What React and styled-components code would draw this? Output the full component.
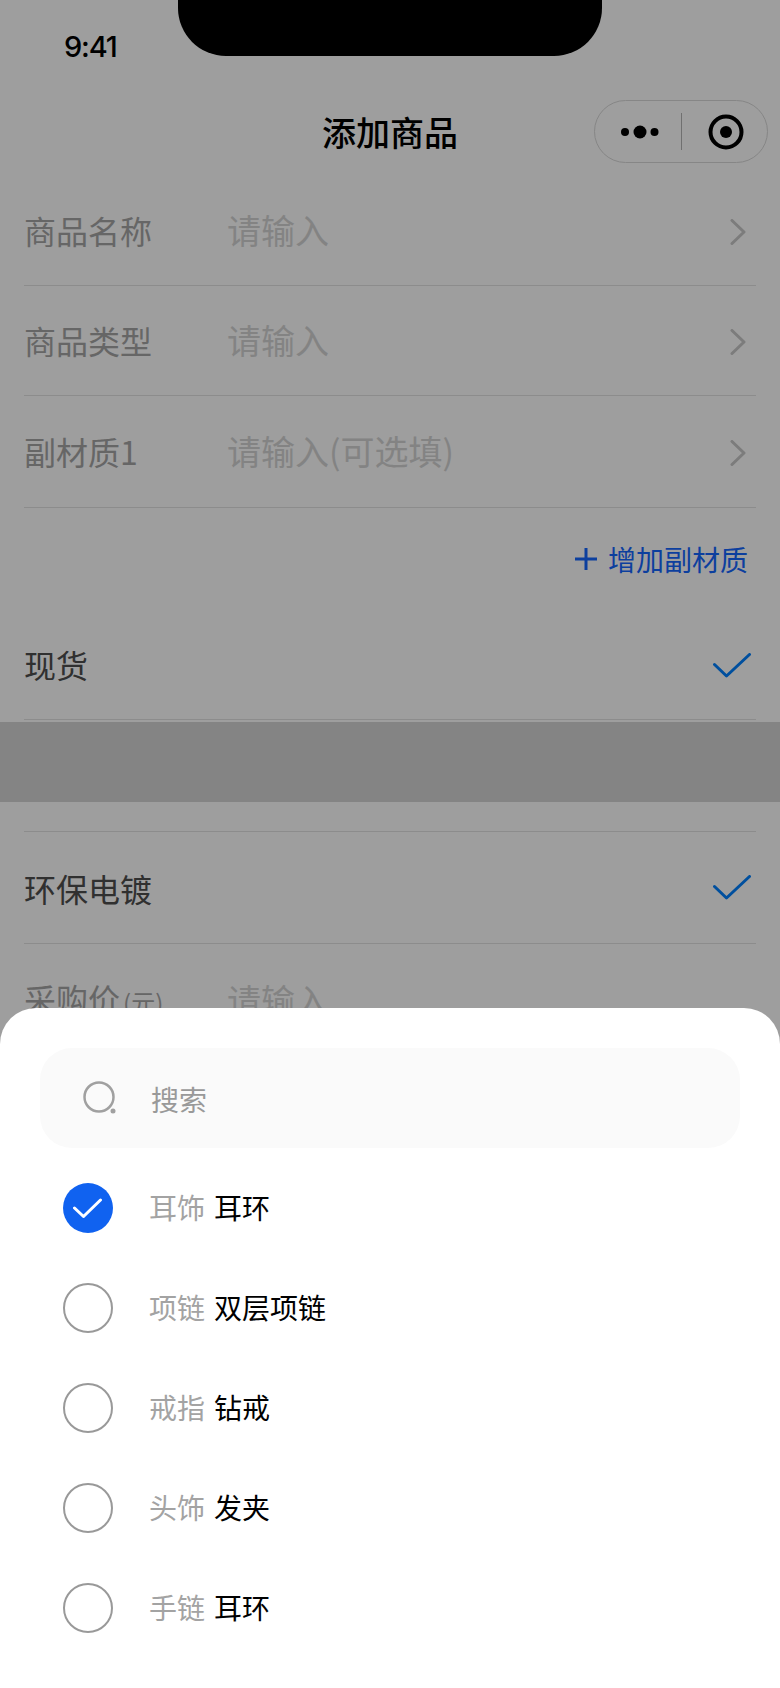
import styled, { createGlobalStyle } from "styled-components";

const GlobalStyle = createGlobalStyle`
  html, body {
    margin: 0;
    padding: 0;
    background: #fff;
  }
  * {
    box-sizing: border-box;
  }
`

const Page = styled.div`
  position: relative;
  width: 780px;
  height: 1688px;
  overflow: hidden;
  background: #fff;
  font-family: "Noto Sans CJK SC", "Noto Sans", sans-serif;
`
const Notch = styled.div`
  position: absolute;
  top: 0;
  left: 178px;
  width: 424px;
  height: 56px;
  background: #000;
  border-radius: 0 0 48px 48px;
`
const StatusBar = styled.div`
  height: 100px;
  padding: 31px 0 0 64px;
`
const Time = styled.span`
  font-family: "Inter", "Liberation Sans", sans-serif;
  font-size: 29px;
  line-height: 32px;
  font-weight: 500;
  letter-spacing: -1.2px;
  color: #000;
`
const NavBar = styled.div`
  position: relative;
  display: flex;
  justify-content: center;
  align-items: center;
  height: 63px;
`
const Title = styled.h1`
  margin: 0;
  font-size: 34px;
  line-height: 63px;
  font-weight: 500;
  color: #000;
`
const Capsule = styled.div`
  position: absolute;
  top: 0;
  right: 12px;
  display: flex;
  align-items: center;
  width: 174px;
  height: 63px;
  border: 1px solid #d8d8d8;
  border-radius: 32px;
`
const CapsuleSide = styled.div`
  display: flex;
  justify-content: center;
  align-items: center;
  flex: 1;
  padding-left: ${(props) => props.$shift}px;
`
const CapsuleLine = styled.div`
  width: 1px;
  height: 37px;
  background: #b5b5b5;
`
const Form = styled.div`
  padding: 13px 24px 0;
`
const Row = styled.div`
  display: flex;
  align-items: center;
  height: ${(props) => props.$height}px;
  border-bottom: ${(props) => (props.$plain ? "none" : "1px solid #e2e2e2")};
`
const Label = styled.div`
  width: 203px;
  padding-bottom: ${(props) => props.$lift || 0}px;
  font-size: 32px;
  line-height: 44px;
  white-space: nowrap;
  color: ${(props) => (props.$strong ? "#4e4e4e" : "#a5a5a5")};
`
const Unit = styled.span`
  margin-left: 3px;
  font-size: 24px;
`
const Placeholder = styled.div`
  flex: 1;
  padding-bottom: ${(props) => props.$lift || 0}px;
  font-size: 34px;
  line-height: 44px;
  color: #d4d4d4;
`
const ChevronIcon = styled.svg`
  margin: 2px 10px 0 0;
`
const CheckIcon = styled.svg`
  margin-right: 5px;
`
const AddRow = styled.div`
  display: flex;
  justify-content: flex-end;
  align-items: center;
  gap: 11px;
  height: 104px;
  padding: 0 8px 2px 0;
  font-size: 28px;
  color: #1466ff;
`
const Band = styled.div`
  height: 80px;
  margin: 2px 0 0;
  background: #d6d6d6;
`
const Spacer = styled.div`
  height: 30px;
  margin: 0 24px;
  border-bottom: 1px solid #e2e2e2;
`
const LowerForm = styled.div`
  padding: 0 24px;
`
const Overlay = styled.div`
  position: absolute;
  inset: 0;
  background: rgba(0, 0, 0, 0.38);
`
const Sheet = styled.div`
  position: absolute;
  left: 0;
  right: 0;
  bottom: 0;
  height: 680px;
  padding: 40px 40px 0;
  background: #fff;
  border-radius: 36px 36px 0 0;
`
const SearchBox = styled.div`
  display: flex;
  align-items: center;
  gap: 34px;
  height: 100px;
  padding-left: 43px;
  background: #fafafa;
  border-radius: 32px;
`
const SearchText = styled.span`
  padding-top: 2px;
  font-size: 28px;
  color: #999;
`
const OptionList = styled.div`
  padding: 10px 0 0 23px;
`
const Option = styled.div`
  display: flex;
  align-items: center;
  height: 100px;
`
const Radio = styled.div`
  display: flex;
  justify-content: center;
  align-items: center;
  width: 50px;
  height: 50px;
  margin-right: 36px;
  border-radius: 50%;
  background: ${(props) => (props.$checked ? "#1062f0" : "#fff")};
  border: ${(props) => (props.$checked ? "none" : "2px solid #999")};
`
const Category = styled.span`
  margin-right: 9px;
  padding-bottom: 2px;
  font-size: 28px;
  color: #a3a3a3;
`
const Name = styled.span`
  padding-bottom: 2px;
  font-size: 28px;
  color: #000;
`

const rows = [
  { label: "商品名称", hint: "请输入", height: 110 },
  { label: "商品类型", hint: "请输入", height: 110 },
  { label: "副材质1", hint: "请输入(可选填)", height: 112 },
]

const options = [
  { category: "耳饰", name: "耳环", checked: true },
  { category: "项链", name: "双层项链" },
  { category: "戒指", name: "钻戒" },
  { category: "头饰", name: "发夹" },
  { category: "手链", name: "耳环" },
]

function Chevron() {
  return (
    <ChevronIcon width="16" height="26" viewBox="0 0 16 26" fill="none">
      <path d="M2 1.5 L14 13 L2 24.5" stroke="#c8c8c8" strokeWidth="3" strokeLinecap="round" strokeLinejoin="round" />
    </ChevronIcon>
  )
}

function Check() {
  return (
    <CheckIcon width="38" height="25" viewBox="0 0 38 25" fill="none">
      <path d="M1.5 11.5 L13.500 23 L36.500 1.5" stroke="#0080ff" strokeWidth="3" strokeLinecap="round" strokeLinejoin="round" />
    </CheckIcon>
  )
}

function App() {
  return (
    <Page>
      <GlobalStyle />
      <StatusBar>
        <Time>9:41</Time>
      </StatusBar>
      <Notch />
      <NavBar>
        <Title>添加商品</Title>
        <Capsule>
          <CapsuleSide $shift={3}>
            <svg width="38" height="14" viewBox="0 0 38 14">
              <circle cx="4" cy="7" r="4" fill="#000" />
              <circle cx="19" cy="7" r="6.5" fill="#000" />
              <circle cx="33.500" cy="7" r="4" fill="#000" />
            </svg>
          </CapsuleSide>
          <CapsuleLine />
          <CapsuleSide $shift={2}>
            <svg width="36" height="36" viewBox="0 0 36 36">
              <circle cx="18" cy="18" r="15.500" fill="none" stroke="#000" strokeWidth="4" />
              <circle cx="18" cy="18" r="6" fill="#000" />
            </svg>
          </CapsuleSide>
        </Capsule>
      </NavBar>

      <Form>
        {rows.map((row) => (
          <Row key={row.label} $height={row.height}>
            <Label $lift={2}>{row.label}</Label>
            <Placeholder $lift={2}>{row.hint}</Placeholder>
            <Chevron />
          </Row>
        ))}
        <AddRow>
          <svg width="22" height="22" viewBox="0 0 22 22">
            <path d="M0 11 H22 M11 0 V22" stroke="#1466ff" strokeWidth="3" />
          </svg>
          增加副材质
        </AddRow>
        <Row $height={108}>
          <Label $strong $lift={4}>现货</Label>
          <Placeholder />
          <Check />
        </Row>
      </Form>

      <Band />
      <Spacer />

      <LowerForm>
        <Row $height={112}>
          <Label $strong>环保电镀</Label>
          <Placeholder />
          <Check />
        </Row>
        <Row $height={112} $plain>
          <Label>采购价<Unit>(元)</Unit></Label>
          <Placeholder>请输入</Placeholder>
        </Row>
      </LowerForm>

      <Overlay />

      <Sheet>
        <SearchBox>
          <svg width="34" height="34" viewBox="0 0 34 34" fill="none">
            <circle cx="16" cy="16" r="14.500" stroke="#a0a0a0" strokeWidth="2.500" />
            <circle cx="30" cy="30" r="2.500" fill="#a0a0a0" />
          </svg>
          <SearchText>搜索</SearchText>
        </SearchBox>
        <OptionList>
          {options.map((option) => (
            <Option key={option.category}>
              <Radio $checked={option.checked}>
                {option.checked && (
                  <svg width="30" height="22" viewBox="0 0 30 22" fill="none">
                    <path d="M1.500 11 L10.500 19.500 L27.500 3" stroke="#fff" strokeWidth="3" strokeLinecap="round" strokeLinejoin="round" />
                  </svg>
                )}
              </Radio>
              <Category>{option.category}</Category>
              <Name>{option.name}</Name>
            </Option>
          ))}
        </OptionList>
      </Sheet>
    </Page>
  );
}

export default App;
